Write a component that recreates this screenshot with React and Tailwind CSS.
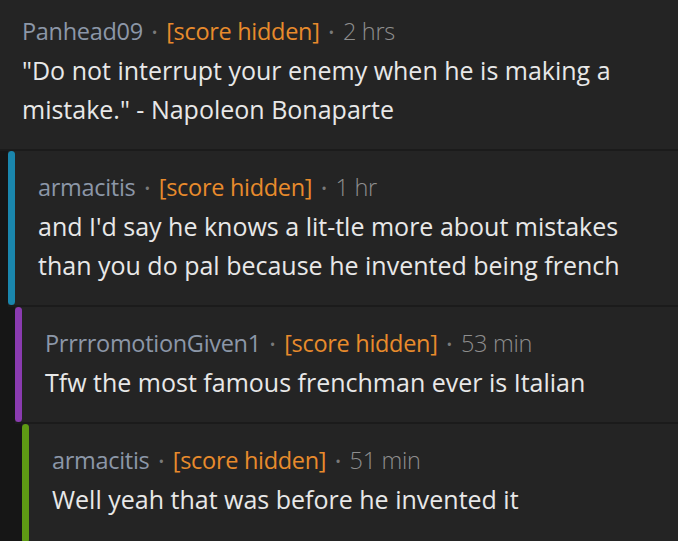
const comments = [
  {
    depth: 0,
    author: 'Panhead09',
    time: '2 hrs',
    lines: ['"Do not interrupt your enemy when he is making a', 'mistake." - Napoleon Bonaparte'],
  },
  {
    depth: 1,
    bar: 'bg-[#1a86ad]',
    author: 'armacitis',
    time: '1 hr',
    lines: ["and I'd say he knows a lit-tle more about mistakes", 'than you do pal because he invented being french'],
  },
  {
    depth: 2,
    bar: 'bg-[#8a3bb0]',
    author: 'PrrrromotionGiven1',
    time: '53 min',
    lines: ['Tfw the most famous frenchman ever is Italian'],
  },
  {
    depth: 3,
    bar: 'bg-[#5e9a14]',
    author: 'armacitis',
    time: '51 min',
    lines: ['Well yeah that was before he invented it'],
  },
];

const indents = ['w-0', 'w-[8px]', 'w-[15px]', 'w-[22px]'];

function Comment({ c, last }) {
  return (
    <div className="flex">
      <div className={`${indents[c.depth]} shrink-0 bg-[#161616]`} />
      {c.depth > 0 && <div className={`w-[7px] shrink-0 rounded-[4px] ${c.bar}`} />}
      <div
        className={`flex-1 bg-[#242424] ${c.depth > 0 ? 'pl-[23px] pt-[18px]' : 'pl-[22px] pt-[13px]'} ${last ? 'pb-[24px]' : 'pb-[20px]'}`}
      >
        <div className="flex items-center h-[38px] text-[23.5px] tracking-[-0.3px] whitespace-nowrap">
          <span className="text-[#8c97a8]">{c.author}</span>
          <span className="text-[#7a7a7a] mx-[9px] text-[15px]">•</span>
          <span className="text-[#e88b2c]">[score hidden]</span>
          <span className="text-[#7a7a7a] mx-[9px] text-[15px]">•</span>
          <span className="text-[#8e8e8e] font-light">{c.time}</span>
        </div>
        <div className="text-[25px] leading-[39px] text-[#e8e8e8]">
          {c.lines.map((l, i) => (
            <div key={i} className="whitespace-nowrap">{l}</div>
          ))}
        </div>
      </div>
    </div>
  );
}

export default function App() {
  return (
    <div
      className="w-[678px] h-[541px] overflow-hidden bg-[#242424]"
      style={{ fontFamily: '"Open Sans", "Noto Sans", sans-serif' }}
    >
      {comments.map((c, i) => (
        <div key={i}>
          {i > 0 && (
            <div className="flex h-[2px]">
              <div className={`${indents[Math.max(c.depth - 1, 0)]} shrink-0 bg-[#161616]`} />
              <div className="flex-1 bg-[#1b1b1b]" />
            </div>
          )}
          <Comment c={c} last={i === comments.length - 1} />
        </div>
      ))}
    </div>
  );
}
